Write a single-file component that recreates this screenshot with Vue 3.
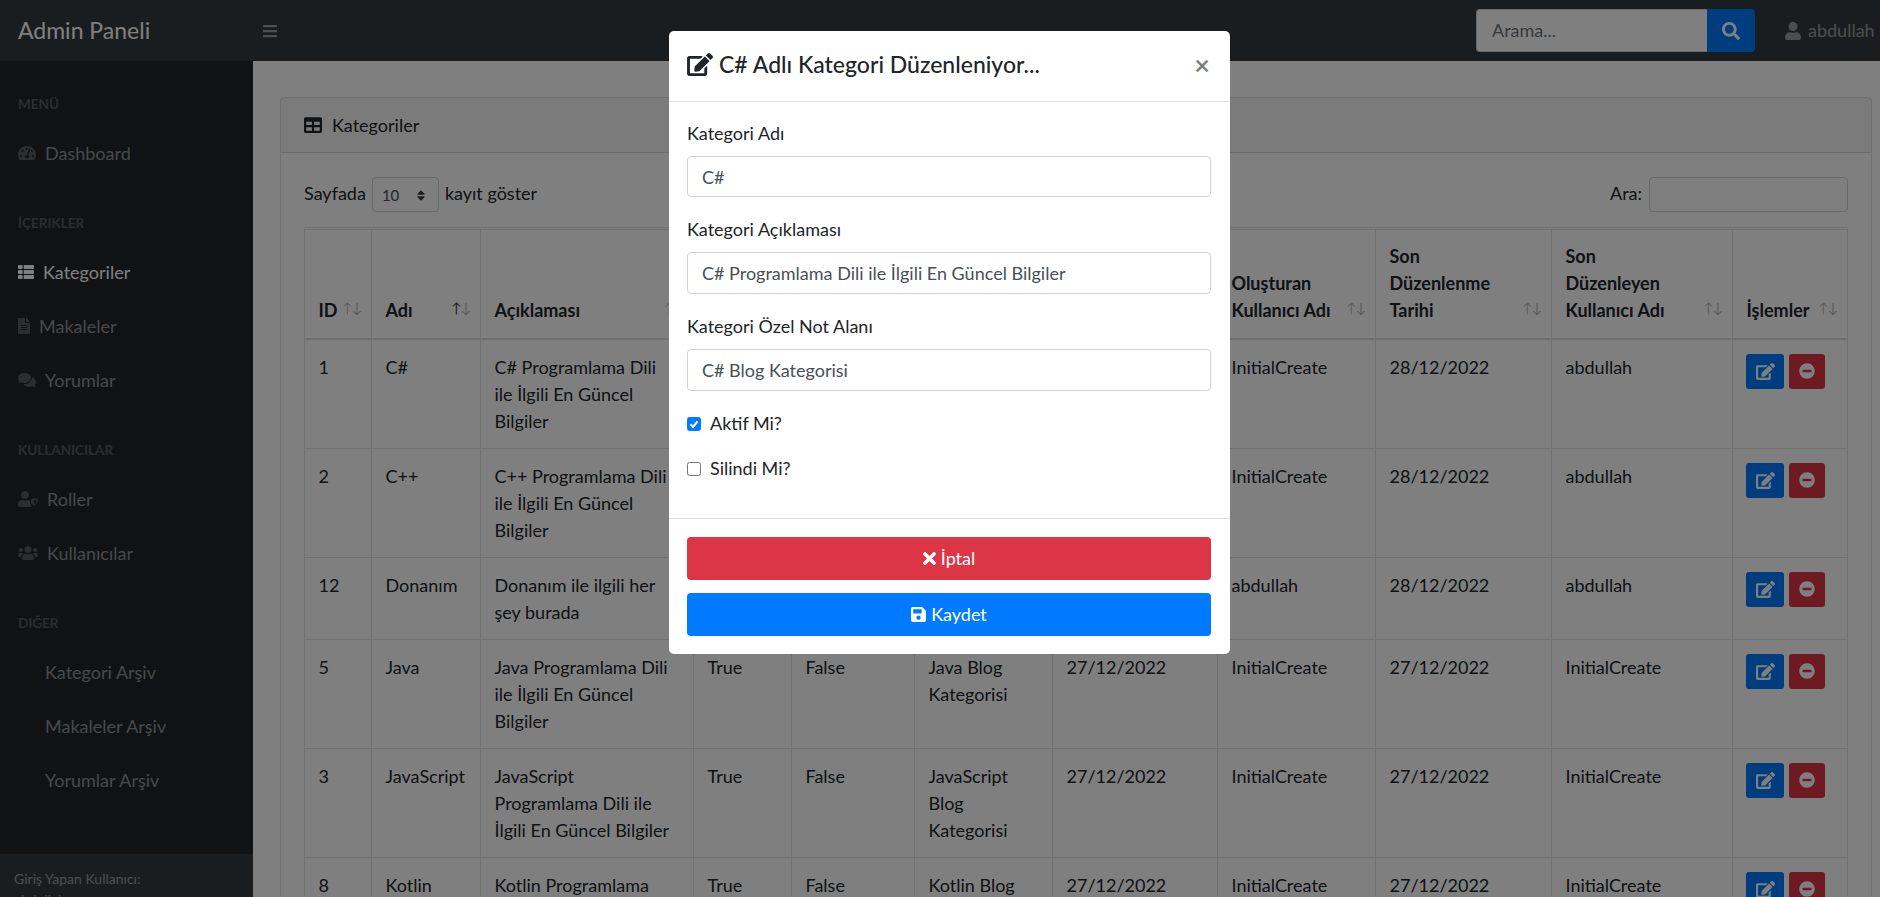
<template>
  <div class="page">
    <header class="topnav">
      <a class="brand">Admin Paneli</a>
      <button class="toggle">
        <svg viewBox="0 0 448 512" class="ic"><path d="M16 132h416c8.800 0 16-7.200 16-16V76c0-8.800-7.200-16-16-16H16C7.200 60 0 67.200 0 76v40c0 8.800 7.200 16 16 16zm0 160h416c8.800 0 16-7.200 16-16v-40c0-8.800-7.200-16-16-16H16c-8.800 0-16 7.200-16 16v40c0 8.800 7.200 16 16 16zm0 160h416c8.800 0 16-7.200 16-16v-40c0-8.800-7.200-16-16-16H16c-8.800 0-16 7.200-16 16v40c0 8.800 7.200 16 16 16z"/></svg>
      </button>
      <div class="nav-search">
        <span class="search-input">Arama...</span>
        <button class="search-btn">
          <svg viewBox="0 0 512 512" class="ic"><path d="M505 442.700L405.300 343c-4.500-4.500-10.600-7-17-7H372c27.600-35.300 44-79.700 44-128C416 93.100 322.900 0 208 0S0 93.100 0 208s93.100 208 208 208c48.300 0 92.700-16.400 128-44v16.300c0 6.400 2.500 12.500 7 17l99.700 99.700c9.400 9.400 24.600 9.400 33.900 0l28.300-28.300c9.400-9.400 9.400-24.600.1-34zM208 336c-70.700 0-128-57.200-128-128 0-70.700 57.200-128 128-128 70.700 0 128 57.200 128 128 0 70.700-57.200 128-128 128z"/></svg>
        </button>
      </div>
      <div class="nav-user">
        <svg viewBox="0 0 448 512" class="ic"><path d="M224 256c70.700 0 128-57.300 128-128S294.700 0 224 0 96 57.300 96 128s57.300 128 128 128zm89.600 32h-16.700c-22.200 10.200-46.900 16-72.900 16s-50.600-5.800-72.900-16h-16.700C60.200 288 0 348.200 0 422.400V464c0 26.500 21.500 48 48 48h352c26.500 0 48-21.500 48-48v-41.600c0-74.200-60.200-134.400-134.400-134.400z"/></svg>
        <span>abdullah</span>
      </div>
    </header>

    <div class="layout">
      <aside class="sidenav">
        <div class="menu">
          <template v-for="group in menu" :key="group.title">
            <div class="menu-heading">{{ group.title }}</div>
            <a v-for="item in group.items" :key="item.label" class="menu-link" :class="{ active: item.active, plain: !item.icon }">
              <svg v-if="item.icon" :viewBox="icons[item.icon].box" class="menu-ic" :style="{ width: icons[item.icon].w + 'px' }"><path :d="icons[item.icon].d" /></svg>
              {{ item.label }}
            </a>
          </template>
        </div>
        <div class="side-footer">
          <div>Giriş Yapan Kullanıcı:</div>
          <div>abdullah</div>
        </div>
      </aside>

      <main class="content">
        <section class="card">
          <div class="card-head">
            <svg viewBox="0 0 512 512" class="head-ic"><path d="M464 32H48C21.490 32 0 53.490 0 80v352c0 26.510 21.490 48 48 48h416c26.510 0 48-21.490 48-48V80c0-26.510-21.490-48-48-48zM224 416H64v-96h160v96zm0-160H64v-96h160v96zm224 160H288v-96h160v96zm0-160H288v-96h160v96z"/></svg>
            Kategoriler
          </div>
          <div class="card-body">
            <div class="tools">
              <div class="length">
                Sayfada
                <span class="select">10
                  <svg viewBox="0 0 320 512" class="sort-ic"><path d="M41 288h238c21.400 0 32.100 25.900 17 41L177 448c-9.400 9.400-24.600 9.400-33.900 0L24 329c-15.100-15.100-4.400-41 17-41zm255-105L177 64c-9.400-9.400-24.600-9.400-33.900 0L24 183c-15.100 15.100-4.400 41 17 41h238c21.400 0 32.100-25.900 17-41z"/></svg>
                </span>
                kayıt göster
              </div>
              <div class="filter">Ara: <span class="filter-input"></span></div>
            </div>
            <table class="table">
              <colgroup>
                <col v-for="w in colWidths" :key="w.k" :style="{ width: w.v + 'px' }" />
              </colgroup>
              <thead>
                <tr>
                  <th v-for="(h, i) in headers" :key="i">
                    <div v-for="line in h" :key="line">{{ line }}</div>
                    <span class="sorter"><i :class="{ on: i === 1 }">↑</i><i>↓</i></span>
                  </th>
                </tr>
              </thead>
              <tbody>
                <tr v-for="row in rows" :key="row.id">
                  <td>{{ row.id }}</td>
                  <td>{{ row.name }}</td>
                  <td class="desc">{{ row.desc }}</td>
                  <td>True</td>
                  <td>False</td>
                  <td>{{ row.note }}</td>
                  <td>{{ row.created }}</td>
                  <td>{{ row.by }}</td>
                  <td>{{ row.edited }}</td>
                  <td>{{ row.editor }}</td>
                  <td class="acts">
                    <button class="act blue">
                      <svg viewBox="0 0 576 512" class="act-ic"><path :d="editPath" /></svg>
                    </button>
                    <button class="act red">
                      <svg viewBox="0 0 512 512" class="act-ic small"><path d="M256 8C119 8 8 119 8 256s111 248 248 248 248-111 248-248S393 8 256 8zM124 296c-6.600 0-12-5.400-12-12v-56c0-6.600 5.400-12 12-12h264c6.600 0 12 5.400 12 12v56c0 6.600-5.400 12-12 12H124z"/></svg>
                    </button>
                  </td>
                </tr>
              </tbody>
            </table>
          </div>
        </section>
      </main>
    </div>

    <div class="backdrop"></div>

    <div class="modal">
      <div class="modal-head">
        <h5>
          <svg viewBox="0 0 576 512" class="title-ic"><path :d="editPath" /></svg>
          C# Adlı Kategori Düzenleniyor...
        </h5>
        <span class="close">×</span>
      </div>
      <div class="modal-body">
        <div v-for="f in fields" :key="f.label" class="field">
          <label>{{ f.label }}</label>
          <div class="input">{{ f.value }}</div>
        </div>
        <div class="check">
          <span class="box on">
            <svg viewBox="0 0 12 12"><path d="M2.500 6.300l2.500 2.600 4.500-5.400" fill="none" stroke="#fff" stroke-width="2" /></svg>
          </span>
          Aktif Mi?
        </div>
        <div class="check">
          <span class="box"></span>
          Silindi Mi?
        </div>
      </div>
      <div class="modal-foot">
        <button class="wide danger">
          <svg viewBox="0 0 352 512" class="btn-ic times"><path d="M242.720 256l100.070-100.070c12.280-12.280 12.280-32.190 0-44.480l-22.240-22.240c-12.280-12.280-32.190-12.280-44.480 0L176 189.280 75.930 89.210c-12.280-12.280-32.190-12.280-44.480 0L9.210 111.450c-12.280 12.280-12.280 32.190 0 44.480L109.280 256 9.210 356.070c-12.280 12.280-12.280 32.190 0 44.480l22.240 22.240c12.280 12.280 32.200 12.280 44.480 0L176 322.720l100.070 100.070c12.280 12.280 32.200 12.280 44.480 0l22.240-22.240c12.280-12.280 12.280-32.190 0-44.480L242.720 256z"/></svg>
          İptal
        </button>
        <button class="wide primary">
          <svg viewBox="0 0 448 512" class="btn-ic"><path d="M433.900 129.900l-83.900-83.900A48 48 0 0 0 316.100 32H48C21.490 32 0 53.490 0 80v352c0 26.510 21.490 48 48 48h352c26.510 0 48-21.490 48-48V163.900a48 48 0 0 0-14.100-33.900zM224 416c-35.350 0-64-28.650-64-64 0-35.350 28.650-64 64-64s64 28.650 64 64c0 35.350-28.650 64-64 64zm96-304.520V212c0 6.630-5.370 12-12 12H76c-6.630 0-12-5.370-12-12V108c0-6.630 5.370-12 12-12h228.520c3.180 0 6.240 1.260 8.480 3.520l3.480 3.480A12 12 0 0 1 320 111.480z"/></svg>
          Kaydet
        </button>
      </div>
    </div>
  </div>
</template>

<script setup>
const editPath = "M402.600 83.200l90.200 90.200c3.800 3.800 3.800 10 0 13.800L274.400 405.600l-92.800 10.300c-12.400 1.400-22.900-9.100-21.500-21.500l10.300-92.800L388.800 83.200c3.800-3.800 10-3.800 13.800 0zm162-22.900l-48.800-48.800c-15.200-15.200-39.900-15.200-55.200 0l-35.400 35.400c-3.800 3.800-3.800 10 0 13.800l90.200 90.200c3.800 3.800 10 3.800 13.800 0l35.400-35.400c15.200-15.300 15.200-40 0-55.200zM384 346.200V448H64V128h229.800c3.200 0 6.200-1.300 8.500-3.500l40-40c7.600-7.600 2.200-20.500-8.500-20.500H48C21.500 64 0 85.500 0 112v352c0 26.500 21.500 48 48 48h352c26.500 0 48-21.500 48-48V306.200c0-10.700-12.900-16-20.500-8.500l-40 40c-2.200 2.300-3.500 5.300-3.500 8.500z"

const icons = {
  gauge: { box: "0 0 576 512", w: 18, d: "M288 32C128.900 32 0 160.900 0 320c0 52.800 14.300 102.300 39.100 144.800 5.600 9.600 16.300 15.200 27.400 15.200h443c11.100 0 21.800-5.600 27.400-15.200C561.800 422.300 576 372.800 576 320c0-159.100-128.900-288-288-288zm0 64c14.700 0 26.600 10.100 30.300 23.700-1.100 2.300-2.600 4.200-3.500 6.700l-9.200 27.700c-5.100 3.500-11 6-17.600 6-17.700 0-32-14.300-32-32S270.300 96 288 96zM96 384c-17.700 0-32-14.300-32-32s14.300-32 32-32 32 14.300 32 32-14.300 32-32 32zm48-160c-17.700 0-32-14.300-32-32s14.300-32 32-32 32 14.300 32 32-14.300 32-32 32zm246.800-72.400l-61.300 184C343.100 347.300 352 364.500 352 384c0 11.700-3.400 22.600-8.900 32H232.900c-5.500-9.400-8.900-20.300-8.900-32 0-33.900 26.500-61.400 59.900-63.600l61.300-184c4.200-12.600 17.700-19.500 30.400-15.200 12.600 4.200 19.400 17.800 15.200 30.400zm14.700 57.200l15.500-46.600c3.500-1.300 7.100-2.200 11-2.200 17.700 0 32 14.300 32 32s-14.300 32-32 32c-11.400 0-20.800-6.300-26.500-15.200zM480 384c-17.700 0-32-14.300-32-32s14.300-32 32-32 32 14.300 32 32-14.300 32-32 32z" },
  list: { box: "0 0 512 512", w: 16, d: "M149.333 216v80c0 13.255-10.745 24-24 24H24c-13.255 0-24-10.745-24-24v-80c0-13.255 10.745-24 24-24h101.333c13.255 0 24 10.745 24 24zM0 376v80c0 13.255 10.745 24 24 24h101.333c13.255 0 24-10.745 24-24v-80c0-13.255-10.745-24-24-24H24c-13.255 0-24 10.745-24 24zM125.333 32H24C10.745 32 0 42.745 0 56v80c0 13.255 10.745 24 24 24h101.333c13.255 0 24-10.745 24-24V56c0-13.255-10.745-24-24-24zm80 448H488c13.255 0 24-10.745 24-24v-80c0-13.255-10.745-24-24-24H205.333c-13.255 0-24 10.745-24 24v80c0 13.255 10.745 24 24 24zm-24-424v80c0 13.255 10.745 24 24 24H488c13.255 0 24-10.745 24-24V56c0-13.255-10.745-24-24-24H205.333c-13.255 0-24 10.745-24 24zm24 264H488c13.255 0 24-10.745 24-24v-80c0-13.255-10.745-24-24-24H205.333c-13.255 0-24 10.745-24 24v80c0 13.255 10.745 24 24 24z" },
  file: { box: "0 0 384 512", w: 12, d: "M224 136V0H24C10.700 0 0 10.700 0 24v464c0 13.300 10.700 24 24 24h336c13.300 0 24-10.700 24-24V160H248c-13.200 0-24-10.800-24-24zm64 236c0 6.600-5.400 12-12 12H108c-6.600 0-12-5.400-12-12v-8c0-6.600 5.400-12 12-12h168c6.600 0 12 5.400 12 12v8zm0-64c0 6.600-5.400 12-12 12H108c-6.600 0-12-5.400-12-12v-8c0-6.600 5.400-12 12-12h168c6.600 0 12 5.400 12 12v8zm0-72v8c0 6.600-5.400 12-12 12H108c-6.600 0-12-5.400-12-12v-8c0-6.600 5.400-12 12-12h168c6.600 0 12 5.400 12 12zm96-114.100v6.100H256V0h6.100c6.400 0 12.500 2.500 17 7l97.900 98c4.500 4.500 7 10.600 7 16.900z" },
  comments: { box: "0 0 576 512", w: 18, d: "M416 192c0-88.400-93.100-160-208-160S0 103.600 0 192c0 34.300 14.100 65.900 38 92-13.400 30.200-35.500 54.200-35.800 54.500-2.200 2.300-2.800 5.700-1.500 8.700S4.800 352 8 352c36.600 0 66.900-12.300 88.700-25 32.200 15.700 70.300 25 111.300 25 114.900 0 208-71.600 208-160zm122 220c23.900-26 38-57.700 38-92 0-66.900-53.500-124.200-129.300-148.100.9 6.600 1.300 13.300 1.300 20.100 0 105.900-107.700 192-240 192-10.800 0-21.300-.8-31.700-1.900C207.800 439.600 281.800 480 368 480c41 0 79.100-9.200 111.300-25 21.800 12.700 52.100 25 88.700 25 3.200 0 6.100-1.900 7.300-4.800 1.300-2.900.7-6.300-1.500-8.700-.3-.3-22.400-24.200-35.800-54.500z" },
  roles: { box: "0 0 640 512", w: 20, d: "M224 256c70.700 0 128-57.300 128-128S294.700 0 224 0 96 57.300 96 128s57.300 128 128 128zm89.600 32h-16.700c-22.200 10.200-46.900 16-72.900 16s-50.600-5.800-72.900-16h-16.700C60.200 288 0 348.200 0 422.400V464c0 26.500 21.500 48 48 48h352c11 0 21-3.700 29-9.800-29-36-45-88-45-146.200v-30c-20-24-45-38-70.400-38zM622 270l-96-37.500a24 24 0 0 0-17.400 0l-96 37.500c-9 3.500-14.600 12-14.600 21.500 0 93 57 157.300 110.600 178.200a24 24 0 0 0 17.400 0C569 453 640 395 640 291.500c0-9.500-9-18-18-21.500zM517 435V268l83 32c-3 73-47 116-83 135z" },
  users: { box: "0 0 640 512", w: 20, d: "M96 224c35.300 0 64-28.700 64-64s-28.700-64-64-64-64 28.700-64 64 28.700 64 64 64zm448 0c35.300 0 64-28.700 64-64s-28.700-64-64-64-64 28.700-64 64 28.700 64 64 64zm32 32h-64c-17.600 0-33.500 7.100-45.100 18.600 40.300 22.100 68.900 62 75.100 109.400h66c17.700 0 32-14.300 32-32v-32c0-35.300-28.700-64-64-64zm-256 0c61.900 0 112-50.100 112-112S381.900 32 320 32 208 82.100 208 144s50.100 112 112 112zm76.800 32h-8.300c-20.800 10-43.900 16-68.500 16s-47.600-6-68.500-16h-8.300C179.600 288 128 339.600 128 403.200V432c0 26.500 21.500 48 48 48h288c26.500 0 48-21.500 48-48v-28.800c0-63.600-51.600-115.200-115.200-115.200zm-223.700-13.400C161.500 263.100 145.600 256 128 256H64c-35.300 0-64 28.700-64 64v32c0 17.700 14.300 32 32 32h65.900c6.300-47.400 34.900-87.300 75.200-109.400z" }
}

const menu = [
  { title: "Menü", items: [{ label: "Dashboard", icon: "gauge" }] },
  { title: "İçerikler", items: [
    { label: "Kategoriler", icon: "list", active: true },
    { label: "Makaleler", icon: "file" },
    { label: "Yorumlar", icon: "comments" }
  ] },
  { title: "Kullanıcılar", items: [
    { label: "Roller", icon: "roles" },
    { label: "Kullanıcılar", icon: "users" }
  ] },
  { title: "Diğer", items: [
    { label: "Kategori Arşiv" },
    { label: "Makaleler Arşiv" },
    { label: "Yorumlar Arşiv" }
  ] }
]

const colWidths = [67, 109, 213, 98, 123, 138, 165, 158, 176, 181, 116].map((v, k) => ({ k, v }))

const headers = [
  ["ID"], ["Adı"], ["Açıklaması"], ["Aktif", "Mi?"], ["Silindi", "Mi?"], ["Özel", "Not"],
  ["Oluşturma", "Tarihi"], ["Oluşturan", "Kullanıcı Adı"], ["Son", "Düzenlenme", "Tarihi"],
  ["Son", "Düzenleyen", "Kullanıcı Adı"], ["İşlemler"]
]

const mk = (id, name, by, edited, editor) => ({
  id, name,
  desc: `${name} Programlama Dili ile İlgili En Güncel Bilgiler`,
  note: `${name} Blog Kategorisi`,
  created: "27/12/2022", by, edited, editor
})

const rows = [
  mk(1, "C#", "InitialCreate", "28/12/2022", "abdullah"),
  mk(2, "C++", "InitialCreate", "28/12/2022", "abdullah"),
  { id: 12, name: "Donanım", desc: "Donanım ile ilgili her şey burada", note: "Donanım", created: "28/12/2022", by: "abdullah", edited: "28/12/2022", editor: "abdullah" },
  mk(5, "Java", "InitialCreate", "27/12/2022", "InitialCreate"),
  mk(3, "JavaScript", "InitialCreate", "27/12/2022", "InitialCreate"),
  mk(8, "Kotlin", "InitialCreate", "27/12/2022", "InitialCreate")
]

const fields = [
  { label: "Kategori Adı", value: "C#" },
  { label: "Kategori Açıklaması", value: "C# Programlama Dili ile İlgili En Güncel Bilgiler" },
  { label: "Kategori Özel Not Alanı", value: "C# Blog Kategorisi" }
]
</script>

<style>
html, body { margin: 0; height: 100%; overflow: hidden; }
</style>

<style scoped>
.page {
  height: 897px;
  overflow: hidden;
  position: relative;
  font-family: "Lato", "Noto Sans", sans-serif;
  font-size: 18px;
  line-height: 27px;
  color: #212529;
  background: #fff;
}
.ic { display: block; fill: currentColor; }
button { border: 0; padding: 0; font: inherit; }

.topnav {
  height: 61px;
  background: #343a40;
  display: flex;
  align-items: center;
}
.brand {
  width: 253px;
  padding-left: 18px;
  box-sizing: border-box;
  color: #fff;
  font-size: 23px;
}
.toggle {
  background: none;
  color: rgba(255, 255, 255, .5);
  margin-left: 10px;
}
.toggle .ic { width: 14px; height: 16px; }
.nav-search {
  display: flex;
  margin-left: auto;
  height: 43px;
}
.search-input {
  width: 231px;
  box-sizing: border-box;
  padding-left: 15px;
  background: #fff;
  border: 1px solid #ced4da;
  border-right: 0;
  border-radius: 4px 0 0 4px;
  color: #6c757d;
  line-height: 41px;
}
.search-btn {
  width: 48px;
  background: #007bff;
  color: #fff;
  border-radius: 0 4px 4px 0;
  display: flex;
  align-items: center;
  justify-content: center;
}
.search-btn .ic { width: 18px; height: 18px; }
.nav-user {
  width: 95px;
  margin-left: 30px;
  display: flex;
  align-items: center;
  gap: 7px;
  color: rgba(255, 255, 255, .5);
  white-space: nowrap;
}
.nav-user .ic { width: 16px; height: 18px; flex: none; }

.layout { display: flex; height: 836px; }
.sidenav {
  width: 253px;
  flex: none;
  background: #212529;
  display: flex;
  flex-direction: column;
  justify-content: space-between;
}
.menu-heading {
  padding: 33px 18px 12px;
  font-size: 13.500px;
  line-height: 20px;
  font-weight: 700;
  text-transform: uppercase;
  color: rgba(255, 255, 255, .25);
}
.menu-link {
  display: flex;
  align-items: center;
  height: 54px;
  padding-left: 18px;
  color: rgba(255, 255, 255, .5);
}
.menu-link.active { color: #fff; }
.menu-link.plain { padding-left: 45px; }
.menu-ic { height: 18px; margin-right: 9px; fill: rgba(255, 255, 255, .25); flex: none; }
.active .menu-ic { fill: #fff; }
.side-footer {
  height: 43px;
  box-sizing: border-box;
  overflow: hidden;
  padding: 14px 14px 0;
  background: #343a40;
  font-size: 14px;
  line-height: 21px;
  color: rgba(255, 255, 255, .5);
}

.content {
  flex: 1;
  min-width: 0;
  padding: 36px 8px 0 27px;
}
.card {
  border: 1px solid rgba(0, 0, 0, .125);
  border-radius: 4px;
}
.card-head {
  height: 54px;
  padding-left: 23px;
  display: flex;
  align-items: center;
  background: rgba(0, 0, 0, .03);
  border-bottom: 1px solid rgba(0, 0, 0, .125);
}
.head-ic { width: 18px; height: 18px; margin-right: 10px; fill: #212529; }
.card-body { padding: 24px 23px 0; }
.tools {
  display: flex;
  justify-content: space-between;
  height: 35px;
  margin-bottom: 15px;
}
.length, .filter {
  display: flex;
  align-items: flex-start;
  gap: 6px;
  line-height: 32px;
}
.select {
  width: 67px;
  height: 35px;
  box-sizing: border-box;
  padding-left: 9px;
  border: 1px solid #ced4da;
  border-radius: 4px;
  display: flex;
  align-items: center;
  font-size: 15px;
  color: #495057;
  position: relative;
}
.sort-ic { position: absolute; right: 12px; top: 11px; width: 10px; height: 13px; fill: #343a40; }
.filter { gap: 7px; }
.filter-input {
  width: 199px;
  height: 35px;
  box-sizing: border-box;
  border: 1px solid #ced4da;
  border-radius: 4px;
}
.table {
  width: 1544px;
  table-layout: fixed;
  border-collapse: separate;
  border-spacing: 0;
  border-top: 1px solid #dee2e6;
  padding-top: 1px;
}
.table th, .table td {
  padding: 13.500px;
  vertical-align: top;
  text-align: left;
  border-top: 1px solid #dee2e6;
  border-left: 1px solid #dee2e6;
  overflow: hidden;
}
.table th:last-child, .table td:last-child { border-right: 1px solid #dee2e6; }
.table th {
  padding: 12.500px 13.500px 14.500px;
  vertical-align: bottom;
  border-bottom: 2px solid #dee2e6;
  position: relative;
  font-weight: 700;
  white-space: nowrap;
}
.table tbody tr:first-child td { border-top: 0; }
.table td.desc { padding-right: 22px; }
.sorter {
  position: absolute;
  right: 9px;
  bottom: 21px;
  font-size: 14px;
  line-height: 18px;
  font-weight: 400;
  display: flex;
  color: rgba(0, 0, 0, .3);
}
.sorter i { font-style: normal; margin-left: -1px; }
.sorter i.on { color: rgba(0, 0, 0, .8); }
.table td.acts { white-space: nowrap; padding-left: 13px; padding-right: 0; }
.act {
  display: inline-flex;
  align-items: center;
  justify-content: center;
  height: 35px;
  border-radius: 3px;
  vertical-align: top;
}
.act.blue { width: 38px; background: #007bff; }
.act.red { width: 36px; background: #dc3545; margin-left: 5px; }
.act-ic { width: 19px; height: 17px; fill: #fff; }
.act-ic.small { width: 16px; height: 16px; }

.backdrop {
  position: absolute;
  inset: 0;
  background: #000;
  opacity: .5;
}
.modal {
  position: absolute;
  left: 669px;
  top: 31px;
  width: 561px;
  height: 623px;
  box-sizing: border-box;
  background: #fff;
  border-radius: 5px;
  display: flex;
  flex-direction: column;
}
.modal-head {
  height: 71px;
  box-sizing: border-box;
  padding: 0 18px 3px;
  flex: none;
  display: flex;
  align-items: center;
  justify-content: space-between;
  border-bottom: 1px solid #dee2e6;
}
.modal-head h5 {
  margin: 0;
  display: flex;
  align-items: center;
  font-size: 23px;
  font-weight: 500;
}
.title-ic { width: 26px; height: 23px; margin-right: 6px; fill: #212529; }
.close {
  font-size: 27px;
  font-weight: 700;
  color: #000;
  opacity: .5;
  margin-right: 2px;
}
.modal-body { padding: 18px 19px 0 18px; flex: 1; }
.field { margin-bottom: 19px; }
.field label { display: block; margin-bottom: 9px; line-height: 27px; }
.input {
  height: 42px;
  box-sizing: border-box;
  padding-left: 14px;
  border: 1px solid #ced4da;
  border-radius: 4px;
  color: #495057;
  line-height: 40px;
}
.field:first-child .input { height: 41px; }
.check {
  display: flex;
  align-items: center;
  gap: 9px;
  height: 27px;
  margin-bottom: 18px;
}
.box {
  width: 14px;
  height: 14px;
  box-sizing: border-box;
  border: 1px solid #767676;
  border-radius: 2.500px;
  flex: none;
}
.box.on { background: #007bff; border-color: #007bff; }
.box svg { display: block; }
.modal-foot {
  flex: none;
  padding: 18px 19px 18px 18px;
  display: flex;
  flex-direction: column;
  gap: 13px;
  border-top: 1px solid #dee2e6;
}
.wide {
  height: 43px;
  border-radius: 4px;
  color: #fff;
  display: flex;
  align-items: center;
  justify-content: center;
  gap: 5px;
}
.danger { background: #dc3545; }
.primary { background: #007bff; }
.btn-ic { width: 15px; height: 17px; fill: #fff; }
.btn-ic.times { width: 13px; height: 19px; }
</style>
